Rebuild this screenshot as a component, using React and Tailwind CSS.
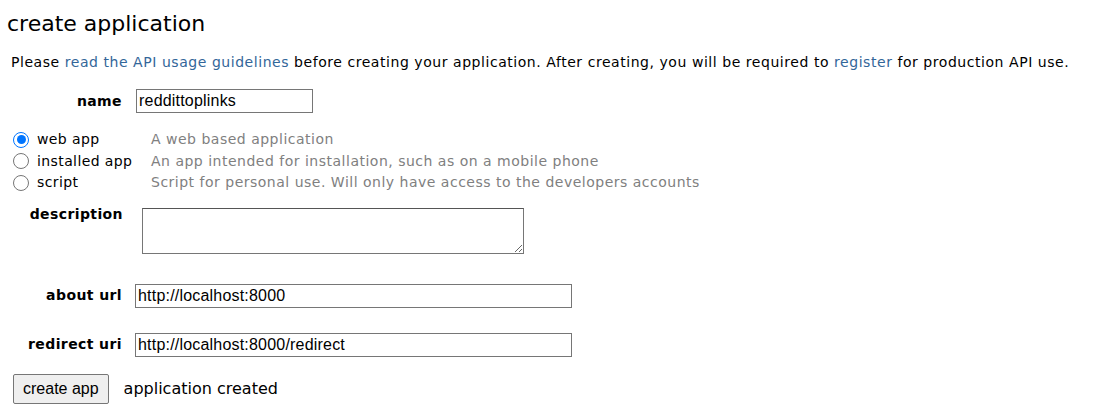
import React from 'react';

const LINK = 'text-[#336699]';

const Radio = ({ checked }) => (
    <span className={`inline-flex items-center justify-center w-[16px] h-[16px] rounded-full border ${checked ? 'border-[#0075ff] border-[1.5px]' : 'border-[#767676]'} bg-white`}>
        {checked && <span className="w-[9px] h-[9px] rounded-full bg-[#0075ff]" />}
    </span>
);

const APP_TYPES = [
    { label: 'web app', desc: 'A web based application', checked: true },
    { label: 'installed app', desc: 'An app intended for installation, such as on a mobile phone' },
    { label: 'script', desc: 'Script for personal use. Will only have access to the developers accounts' },
];

const inputCls = 'h-[24px] border border-[#767676] px-[2px] text-[16px] tracking-[0.2px] text-black bg-white outline-none font-["Liberation_Sans",Arial,sans-serif]';
const labelCls = 'w-[122px] text-right text-[14px] font-bold tracking-[0.4px]';

export default function App() {
    return (
        <div className="w-[1096px] h-[420px] bg-white text-black font-['DejaVu_Sans',Verdana,sans-serif] overflow-hidden">
            <h1 className="h-[46px] flex items-center pl-[7px] text-[22px] font-normal">create application</h1>
            <p className="h-[32px] flex items-center pl-[11px] text-[14px] tracking-[0.55px]">
                <span>
                    Please <span className={LINK}>read the API usage guidelines</span> before creating your application. After creating, you will be required to <span className={LINK}>register</span> for production API use.
                </span>
            </p>

            <div className="mt-[11px] flex items-center">
                <label className={labelCls}>name</label>
                <input className={`${inputCls} ml-[14px] w-[177px]`} defaultValue="reddittoplinks" />
            </div>

            <div className="mt-[16px] flex flex-col">
                {APP_TYPES.map(t => (
                    <div key={t.label} className="h-[21.5px] flex items-center">
                        <div className="w-[151px] flex items-center pl-[13px]">
                            <Radio checked={t.checked} />
                            <span className="ml-[8px] text-[14px] tracking-[0.4px]">{t.label}</span>
                        </div>
                        <span className="text-[14px] tracking-[0.5px] text-[#808080]">{t.desc}</span>
                    </div>
                ))}
            </div>

            <div className="mt-[14px] flex items-start">
                <label className={`${labelCls} w-[123px] leading-[12px]`}>description</label>
                <textarea className="ml-[19px] w-[382px] h-[46px] border border-[#767676] border-t-[#555] resize-y outline-none" />
            </div>

            <div className="mt-[30px] flex items-center">
                <label className={labelCls}>about url</label>
                <input className={`${inputCls} ml-[13px] w-[437px]`} defaultValue="http://localhost:8000" />
            </div>

            <div className="mt-[25px] flex items-center">
                <label className={labelCls}>redirect uri</label>
                <input className={`${inputCls} ml-[13px] w-[437px]`} defaultValue="http://localhost:8000/redirect" />
            </div>

            <div className="mt-[17px] flex items-center pl-[13px]">
                <button className="h-[30px] px-[9px] bg-[#efefef] border border-[#767676] rounded-[2px] text-[16px] font-['Liberation_Sans',Arial,sans-serif]">create app</button>
                <span className="ml-[15px] text-[16px]">application created</span>
            </div>
        </div>
    );
}
